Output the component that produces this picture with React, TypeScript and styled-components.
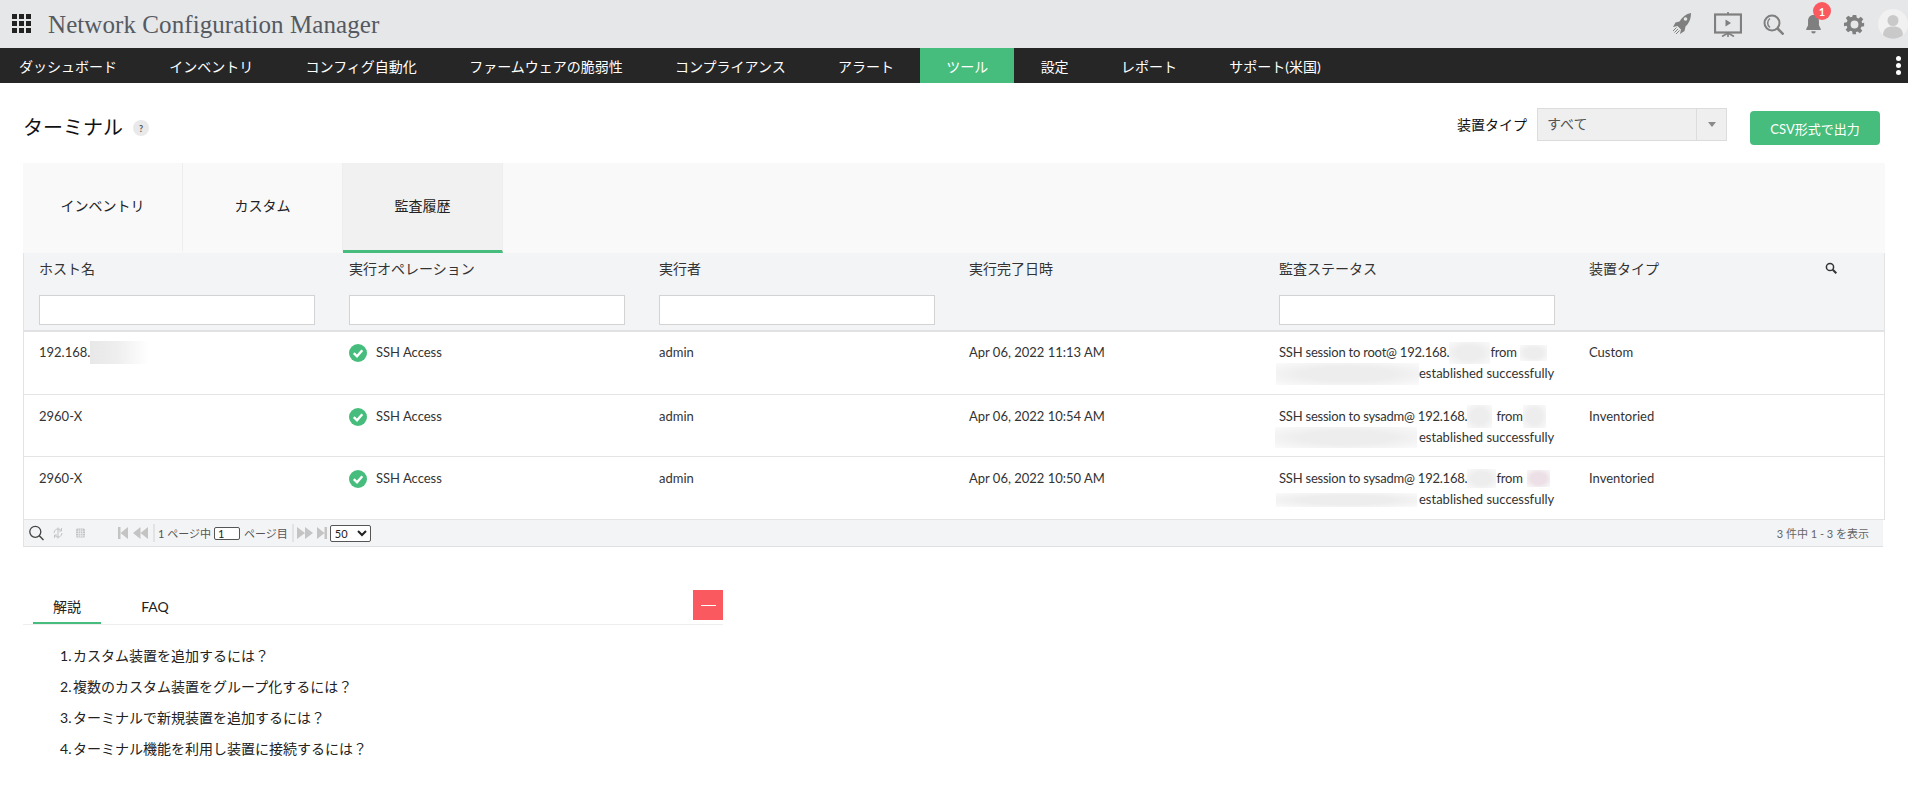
import React from "react";
import styled, { createGlobalStyle } from "styled-components";

const Global = createGlobalStyle`
  html, body { margin: 0; padding: 0; background: #fff; }
  body { font-family: Lato, "Noto Sans CJK JP", sans-serif; color: #222; overflow: hidden; }
  * { box-sizing: border-box; }
`;

const TopBar = styled.header`
  height: 48px; background: #e6e7e9; display: flex; align-items: center; padding: 0 0 0 12px;
`;
const AppTitle = styled.h1`
  margin: 0 0 0 16px; font: 400 25px/1 "Liberation Serif", serif; color: #555a61; flex: 1; letter-spacing: 0.08px;
`;
const TopIcons = styled.div`display: flex; align-items: center;`;
const IconSlot = styled.span<{ $w: number; $ml: number }>`
  position: relative; display: flex; width: ${p => p.$w}px; margin-left: ${p => p.$ml}px;
`;
const Badge = styled.span`
  position: absolute; left: 8px; top: -12px; width: 18px; height: 18px; border-radius: 50%;
  background: #fa5a5f; color: #fff; font-size: 11px; font-weight: 700; display: flex; align-items: center; justify-content: center;
`;

const Nav = styled.nav`height: 35px; background: #262626; display: flex; position: relative;`;
const NavItem = styled.a<{ $active?: boolean }>`
  display: flex; align-items: center; padding: 0 26.15px; color: #fff; font-size: 14px; white-space: nowrap;
  background: ${p => (p.$active ? "#47bd7d" : "transparent")};
  &:first-child { padding-left: 19px; }
`;
const NavMore = styled.span`
  position: absolute; right: 7px; top: 8px; display: flex; flex-direction: column; gap: 2px;
  i { display: block; width: 5px; height: 5px; border-radius: 50%; background: #fff; }
`;

const Main = styled.main`padding: 0 23px;`;
const TitleRow = styled.div`height: 80px; display: flex; align-items: flex-start; position: relative;`;
const PageTitle = styled.h2`margin: 32px 0 0; font-size: 20px; font-weight: 400; line-height: 24px; color: #111;`;
const Help = styled.span`
  margin: 37px 0 0 10px; width: 16px; height: 16px; border-radius: 50%; background: #e9e9e9; color: #555;
  font-size: 9px; font-weight: 700; display: flex; align-items: center; justify-content: center;
`;
const Filters = styled.div`margin-left: auto; padding: 25px 5px 0 0; display: flex; align-items: flex-start;`;
const FilterLabel = styled.span`font-size: 14px; line-height: 33px; margin-right: 10px; color: #111;`;
const Select = styled.div`
  width: 190px; height: 33px; background: #efefef; border: 1px solid #dcdcdc; display: flex; align-items: center;
  font-size: 14px; color: #555;
`;
const SelectValue = styled.span`flex: 1; padding: 0 0 3px 9px;`;
const SelectArrow = styled.span`
  width: 30px; height: 100%; border-left: 1px solid #dcdcdc; display: flex; align-items: center; justify-content: center;
  &::after { content: ""; border: 4px solid transparent; border-top: 5px solid #8a8a8a; border-bottom: 0; }
`;
const CsvButton = styled.button`
  margin: 3px 0 0 23px; width: 130px; height: 34px; border: 0; border-radius: 4px; background: #47bd7d; color: #fff;
  font: 400 13px Lato, "Noto Sans CJK JP", sans-serif;
`;

const Tabs = styled.div`height: 90px; background: #f9f9f9; display: flex;`;
const Tab = styled.div<{ $active?: boolean }>`
  width: 160px; display: flex; align-items: center; justify-content: center; font-size: 14px; color: #222;
  border-right: 1px solid #eeeeee; padding-bottom: 4px;
  background: ${p => (p.$active ? "#f1f1f1" : "transparent")};
  border-bottom: 3px solid ${p => (p.$active ? "#47bd7d" : "transparent")};
`;

const Grid = styled.section`border-left: 1px solid #e4e4e4; border-right: 1px solid #e4e4e4;`;
const HeadRow = styled.div`
  height: 79px; background: #f3f4f6; border-bottom: 2px solid #e2e2e4;
  display: grid; grid-template-columns: repeat(6, 310px);
`;
const HeadCell = styled.div`padding: 6px 0 0 15px; display: flex; flex-direction: column;`;
const HeadLabel = styled.div`
  height: 20px; line-height: 20px; font-size: 14px; color: #333; display: flex; justify-content: space-between;
  padding-right: 47px;
`;
const HeadSearch = styled.svg`width: 12px; height: 12px; margin-top: 3px;`;
const HeadInput = styled.input`
  margin-top: 16px; width: 276px; height: 30px; border: 1px solid #d3d3d3; background: #fff; display: block;
`;
const Cell = styled.div`padding: 10px 0 0 15px; font-size: 13px; line-height: 21px; color: #333; white-space: nowrap;`;
const Row = styled.div`
  height: 63px; border-bottom: 1px solid #e4e4e4; display: grid; grid-template-columns: repeat(6, 310px);
  & + & { height: 62px; }
  & + & > ${Cell} { padding-top: 11px; }
  &:last-child { height: 63px; }
`;
const StatusCell = styled(Cell)`display: flex; align-items: flex-start; gap: 9px;`;
const StatusIcon = styled.svg`width: 18px; height: 18px; margin-top: 2px; flex: none;`;
const Line = styled.div`display: flex; align-items: center; height: 21px;`;
const AuditLine = styled(Line)`letter-spacing: -0.22px;`;
const Smudge = styled.span<{ $w: number; $h: number; $ml?: number; $mr?: number; $c?: string; $fade?: boolean }>`
  display: inline-block; flex: none; width: ${p => p.$w}px; height: ${p => p.$h}px;
  margin-left: ${p => p.$ml ?? 0}px; margin-right: ${p => p.$mr ?? 0}px;
  background: ${p => p.$fade
    ? `linear-gradient(90deg, ${p.$c ?? "#e8e8e8"} 0%, #eeeeee 45%, #ffffff 100%)`
    : `radial-gradient(ellipse at center, ${p.$c ?? "#ededed"} 45%, #fafafa 100%)`};
`;

const Pager = styled.div`
  height: 27px; margin-right: 2px; background: #f3f4f6; border-bottom: 1px solid #e0e0e0; border-left: 1px solid #e4e4e4;
  display: flex; align-items: center; font-size: 11px; color: #555; position: relative;
`;
const PagerIcon = styled.svg<{ $ml: number; $w: number }>`
  margin-left: ${p => p.$ml}px; width: ${p => p.$w}px; height: 16px; flex: none;
`;
const PagerSep = styled.span<{ $ml: number }>`margin-left: ${p => p.$ml}px; width: 2px; height: 18px; background: #e2e3e5;`;
const PagerText = styled.span<{ $ml: number }>`margin-left: ${p => p.$ml}px; white-space: nowrap;`;
const PageInput = styled.input`
  margin-left: 3px; width: 26px; height: 13px; border: 1px solid #555; border-radius: 2px; padding: 0 3px;
  font: 11px Lato, sans-serif; color: #222;
`;
const SizeSelect = styled.select`
  margin-left: 3px; width: 41px; height: 17px; border: 1px solid #555; border-radius: 2px; background: #fff;
  font: 11px Lato, sans-serif; color: #222; padding: 0;
`;
const PagerInfo = styled.span`margin-left: auto; padding-right: 14px; color: #666;`;

const Help2 = styled.section`margin: 43px 0 0; width: 700px;`;
const HelpTabs = styled.div`height: 35px; border-bottom: 1px solid #eee; display: flex; position: relative;`;
const HelpTab = styled.div<{ $active?: boolean; $w: number; $ml: number }>`
  width: ${p => p.$w}px; margin-left: ${p => p.$ml}px; height: 34px; text-align: center; padding-top: 7px; font-size: 14px;
  line-height: 20px; color: #222;
  border-bottom: 2px solid ${p => (p.$active ? "#47bd7d" : "transparent")};
`;
const Collapse = styled.button`
  position: absolute; right: 0; top: 0; width: 30px; height: 30px; border: 0; padding: 0; background: #fa5a5f;
  display: flex; align-items: center; justify-content: center;
  &::after { content: ""; width: 15px; height: 1px; background: #fff; }
`;
const HelpList = styled.ol`margin: 15px 0 0; padding: 0 0 0 37px; list-style: none;`;
const HelpItem = styled.li`font-size: 14px; line-height: 31px; color: #222; white-space: nowrap; word-spacing: -2px;`;

const Rocket = () => (
  <svg width="20" height="24" viewBox="0 0 20 24" fill="#7f7f7f">
    <path d="M19 1C14 2 10 5 7.500 9.500L3.500 10.500 1 15l4.500-1 3.500 3.500-1 4.500 4.500-3 1-4.500C17 11.500 19 6.500 19 1z" />
    <circle cx="13.500" cy="7" r="1.800" fill="#e6e7e9" />
    <path d="M4.500 15.500 1 19M6 17 2.500 20.500M7.500 18.500 4 22" stroke="#7f7f7f" strokeWidth="1" fill="none" />
  </svg>
);
const Screen = () => (
  <svg width="28" height="25" viewBox="0 0 28 25" fill="none" stroke="#7f7f7f">
    <rect x="1" y="2.500" width="26" height="18" strokeWidth="2.200" />
    <path d="M11.500 7.500 17 11l-5.500 3.500z" fill="#7f7f7f" stroke="none" />
    <path d="M14 0v2M14 20v5M14 21 8 24.500M14 21l6 3.500" strokeWidth="1.600" />
  </svg>
);
const Magnifier = () => (
  <svg width="21" height="21" viewBox="0 0 21 21" fill="none" stroke="#7f7f7f">
    <circle cx="9" cy="9" r="7.500" strokeWidth="2" />
    <path d="M14.500 14.500 20.500 20.500" strokeWidth="2.500" />
    <path d="M7 4.500A5.500 5.500 0 0 0 7 13.500" strokeWidth="1.500" />
  </svg>
);
const Bell = () => (
  <svg width="17" height="20" viewBox="0 0 18 22" fill="#7f7f7f">
    <path d="M9 1c-4 0-6 3-6 7v4.500L1 16.500v1h16v-1l-2-4V8c0-4-2-7-6-7z" />
    <path d="M6.500 19a2.500 2.500 0 0 0 5 0z" />
  </svg>
);
const Gear = () => (
  <svg width="21" height="21" viewBox="0 0 24 24" fill="#7f7f7f" fillRule="evenodd">
    <path d="M10 1h4l.6 3.200 1.900.8 2.700-1.900 2.800 2.800-1.900 2.700.8 1.900L23 10v4l-3.200.6-.8 1.900 1.900 2.700-2.800 2.800-2.700-1.900-1.900.8L13.900 23h-4l-.6-3.200-1.900-.8-2.700 1.900-2.800-2.800 1.900-2.700-.8-1.900L0 13.900v-4l3.200-.6.8-1.900-1.900-2.700 2.800-2.800 2.700 1.900 1.900-.8zM12 7.500a4.500 4.500 0 1 0 0 9 4.500 4.500 0 0 0 0-9z" />
  </svg>
);
const Avatar = () => (
  <svg width="30" height="30" viewBox="0 0 30 30">
    <circle cx="15" cy="15" r="15" fill="#f1f1f1" />
    <circle cx="15" cy="11.500" r="5.500" fill="#c9c9c9" />
    <path d="M5 26c0-6 4-8.500 10-8.500S25 20 25 26a15 15 0 0 1-20 0z" fill="#c9c9c9" />
  </svg>
);
const Apps = () => (
  <svg width="20" height="20" viewBox="0 0 20 20" fill="#222">
    {[0, 7, 14].flatMap(y => [0, 7, 14].map(x => <rect key={`${x}-${y}`} x={x} y={y} width="5" height="5" />))}
  </svg>
);
const Check = () => (
  <StatusIcon viewBox="0 0 18 18">
    <circle cx="9" cy="9" r="9" fill="#47bd7d" />
    <path d="M4.800 9.200 8 12.300l5.300-6" fill="none" stroke="#fff" strokeWidth="2.400" />
  </StatusIcon>
);

const rows = [
  {
    host: <Line>192.168.<Smudge $w={59} $h={23} $fade /></Line>,
    time: "Apr 06, 2022 11:13 AM",
    audit: (
      <>
        <AuditLine>SSH session to root@ 192.168.<Smudge $w={41} $h={22} />from<Smudge $w={27} $h={16} $ml={3} /></AuditLine>
        <Line><Smudge $w={143} $h={22} $ml={-3} />established successfully</Line>
      </>
    ),
    type: "Custom",
  },
  {
    host: "2960-X",
    time: "Apr 06, 2022 10:54 AM",
    audit: (
      <>
        <AuditLine>SSH session to sysadm@ 192.168.<Smudge $w={25} $h={23} $mr={4} />from<Smudge $w={23} $h={23} /></AuditLine>
        <Line><Smudge $w={142} $h={21} $ml={-4} $mr={2} />established successfully</Line>
      </>
    ),
    type: "Inventoried",
  },
  {
    host: "2960-X",
    time: "Apr 06, 2022 10:50 AM",
    audit: (
      <>
        <AuditLine>SSH session to sysadm@ 192.168.<Smudge $w={29} $h={19} />from<Smudge $w={23} $h={17} $ml={4} $c="#ecdfe6" /></AuditLine>
        <Line><Smudge $w={141} $h={14} $ml={-3} $mr={2} />established successfully</Line>
      </>
    ),
    type: "Inventoried",
  },
];

const navItems = ["ダッシュボード", "インベントリ", "コンフィグ自動化", "ファームウェアの脆弱性", "コンプライアンス", "アラート", "ツール", "設定", "レポート", "サポート(米国)"];
const heads = ["ホスト名", "実行オペレーション", "実行者", "実行完了日時", "監査ステータス", "装置タイプ"];
const withInput = [true, true, true, false, true, false];
const faq = ["カスタム装置を追加するには？", "複数のカスタム装置をグループ化するには？", "ターミナルで新規装置を追加するには？", "ターミナル機能を利用し装置に接続するには？"];

export default function App() {
  return (
    <>
      <Global />
      <TopBar>
        <Apps />
        <AppTitle>Network Configuration Manager</AppTitle>
        <TopIcons>
          <IconSlot $w={20} $ml={0}><Rocket /></IconSlot>
          <IconSlot $w={28} $ml={22}><Screen /></IconSlot>
          <IconSlot $w={21} $ml={21}><Magnifier /></IconSlot>
          <IconSlot $w={17} $ml={21}><Bell /><Badge>1</Badge></IconSlot>
          <IconSlot $w={21} $ml={22}><Gear /></IconSlot>
          <IconSlot $w={30} $ml={13}><Avatar /></IconSlot>
        </TopIcons>
      </TopBar>
      <Nav>
        {navItems.map(n => <NavItem key={n} $active={n === "ツール"}>{n}</NavItem>)}
        <NavMore><i /><i /><i /></NavMore>
      </Nav>
      <Main>
        <TitleRow>
          <PageTitle>ターミナル</PageTitle>
          <Help>?</Help>
          <Filters>
            <FilterLabel>装置タイプ</FilterLabel>
            <Select><SelectValue>すべて</SelectValue><SelectArrow /></Select>
            <CsvButton>CSV形式で出力</CsvButton>
          </Filters>
        </TitleRow>
        <Tabs>
          <Tab>インベントリ</Tab>
          <Tab>カスタム</Tab>
          <Tab $active>監査履歴</Tab>
        </Tabs>
        <Grid>
          <HeadRow>
            {heads.map((h, i) => (
              <HeadCell key={h}>
                <HeadLabel>
                  {h}
                  {i === 5 && (
                    <HeadSearch viewBox="0 0 12 12" fill="none" stroke="#333">
                      <circle cx="5" cy="5" r="3.600" strokeWidth="1.500" />
                      <path d="M7.800 7.800l3.500 3.500" strokeWidth="2" />
                    </HeadSearch>
                  )}
                </HeadLabel>
                {withInput[i] && <HeadInput />}
              </HeadCell>
            ))}
          </HeadRow>
          {rows.map((r, i) => (
            <Row key={i}>
              <Cell>{r.host}</Cell>
              <StatusCell><Check />SSH Access</StatusCell>
              <Cell>admin</Cell>
              <Cell>{r.time}</Cell>
              <Cell>{r.audit}</Cell>
              <Cell>{r.type}</Cell>
            </Row>
          ))}
        </Grid>
        <Pager>
          <PagerIcon $ml={5} $w={15} viewBox="0 0 15 16" fill="none" stroke="#444">
            <circle cx="6.300" cy="6.800" r="5.500" strokeWidth="1.300" />
            <path d="M10.300 10.800 14.500 15" strokeWidth="1.500" />
          </PagerIcon>
          <PagerIcon $ml={9} $w={10} viewBox="0 0 10 16" fill="none" stroke="#c4c4c4">
            <path d="M1 8A4 4 0 0 1 8 5.300M9 8A4 4 0 0 1 2 10.700M8.500 3v3H6M1.500 13v-3H4M5 2.500v11" strokeWidth="1" />
          </PagerIcon>
          <PagerIcon $ml={13} $w={9} viewBox="0 0 9 16" fill="#c4c4c4">
            <rect x="0" y="3.500" width="9" height="9" rx="1.500" />
            <path d="M0 6.200h9M0 8.500h9M0 10.800h9M2.700 3.500v9M4.500 3.500v9M6.300 3.500v9" stroke="#eeeff1" strokeWidth="0.700" />
          </PagerIcon>
          <PagerIcon $ml={33} $w={10} viewBox="0 0 10 16" fill="#c4c4c4">
            <path d="M0 2h2.500v12H0zM10 2v12L2.500 8z" />
          </PagerIcon>
          <PagerIcon $ml={5} $w={15} viewBox="0 0 15 16" fill="#c4c4c4">
            <path d="M7.500 2v12L0 8zM15 2v12L7.500 8z" />
          </PagerIcon>
          <PagerSep $ml={5} />
          <PagerText $ml={3}>1 ページ中</PagerText>
          <PageInput defaultValue="1" />
          <PagerText $ml={4}>ページ目</PagerText>
          <PagerSep $ml={4} />
          <PagerIcon $ml={3} $w={16} viewBox="0 0 16 16" fill="#c4c4c4">
            <path d="M0 2l8 6-8 6zM8 2l8 6-8 6z" />
          </PagerIcon>
          <PagerIcon $ml={4} $w={10} viewBox="0 0 10 16" fill="#c4c4c4">
            <path d="M0 2l7.500 6L0 14zM7.500 2H10v12H7.500z" />
          </PagerIcon>
          <SizeSelect defaultValue="50"><option>50</option></SizeSelect>
          <PagerInfo>3 件中 1 - 3 を表示</PagerInfo>
        </Pager>
        <Help2>
          <HelpTabs>
            <HelpTab $active $w={68} $ml={10}>解説</HelpTab>
            <HelpTab $w={68} $ml={20}>FAQ</HelpTab>
            <Collapse />
          </HelpTabs>
          <HelpList>
            {faq.map((q, i) => <HelpItem key={q}>{i + 1}. {q}</HelpItem>)}
          </HelpList>
        </Help2>
      </Main>
    </>
  );
}
